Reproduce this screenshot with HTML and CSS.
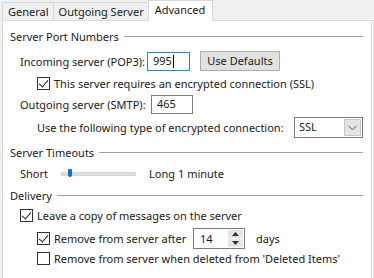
FILE: index.html
```html
<!DOCTYPE html>
<html lang="en">
<head>
    <meta charset="UTF-8">
    <title>Advanced</title>
    <link rel="stylesheet" href="styles.css">
</head>
<body>
<div class="tabs">
    <div class="tab">General</div>
    <div class="tab">Outgoing Server</div>
    <div class="tab active">Advanced</div>
</div>
<div class="panel">
    <div class="group-title"><span>Server Port Numbers</span><i></i></div>
    <div class="row r-incoming">
        <span class="label pop-label">Incoming server (POP3):</span>
        <span class="input focus in-pop">995<b class="caret"></b></span>
        <span class="button">Use Defaults</span>
    </div>
    <div class="row r-ssl indent">
        <span class="check on"></span><span>This server requires an encrypted connection (SSL)</span>
    </div>
    <div class="row r-smtp">
        <span class="label smtp-label">Outgoing server (SMTP):</span>
        <span class="input in-smtp">465</span>
    </div>
    <div class="row r-type indent">
        <span class="label type-label">Use the following type of encrypted connection:</span>
        <span class="select">
            <span class="select-value">SSL</span>
            <span class="select-arrow">
                <svg width="9" height="6" viewBox="0 0 9 6"><path d="M0.5 0.8 L4.5 4.8 L8.5 0.8" fill="none" stroke="#555" stroke-width="1"/></svg>
            </span>
        </span>
    </div>

    <div class="group-title g-timeouts"><span>Server Timeouts</span><i></i></div>
    <div class="row r-timeout">
        <span class="short">Short</span>
        <span class="slider"><span class="track"></span><span class="thumb"></span></span>
        <span class="long">Long</span>
        <span>1 minute</span>
    </div>

    <div class="group-title g-delivery"><span>Delivery</span><i></i></div>
    <div class="row r-leave">
        <span class="check on"></span><span>Leave a copy of messages on the server</span>
    </div>
    <div class="row r-remove indent">
        <span class="check on"></span><span class="remove-label">Remove from server after</span>
        <span class="spin">
            <span class="spin-value">14</span>
            <span class="spin-buttons">
                <span class="spin-btn"><svg width="7" height="4" viewBox="0 0 7 4"><path d="M3.5 0 L7 4 L0 4 Z" fill="#333"/></svg></span>
                <span class="spin-btn"><svg width="7" height="4" viewBox="0 0 7 4"><path d="M0 0 L7 0 L3.5 4 Z" fill="#333"/></svg></span>
            </span>
        </span>
        <span class="days">days</span>
    </div>
    <div class="row r-deleted indent">
        <span class="check"></span><span>Remove from server when deleted from 'Deleted Items'</span>
    </div>
</div>
</body>
</html>
```
FILE: styles.css
```css
/* Dialog base */
body {
    margin: 0;
    background-color: #f0f0f0;
    font-family: 'Noto Sans', 'Open Sans', sans-serif;
    font-size: 11px;
    color: #1a1a1a;
    width: 374px;
    height: 278px;
    overflow: hidden;
}

/* Tabs */
.tabs {
    display: flex;
    height: 20px;
    padding-left: 2px;
    align-items: flex-end;
}

.tab {
    height: 18px;
    line-height: 18px;
    padding: 0 4px 0 5px;
    border: 1px solid #d9d9d9;
    border-bottom: none;
    border-right: none;
    box-sizing: border-box;
    background-color: #f0f0f0;
    white-space: nowrap;
}

.tab.active {
    height: 21px;
    line-height: 17px;
    margin-bottom: -1px;
    background-color: #fff;
    border-right: 1px solid #d9d9d9;
    position: relative;
    z-index: 1;
    padding: 0 7px 0 6px;
}

.panel {
    background-color: #fff;
    border: 1px solid #d9d9d9;
    border-bottom: none;
    margin: 0 2px;
    height: 258px;
    box-sizing: border-box;
    padding: 0 8px 0 7px;
}

/* Group headers */
.group-title {
    display: flex;
    align-items: center;
    height: 16px;
    margin-top: 7px;
    white-space: nowrap;
}

.group-title i {
    flex: 1;
    border-top: 1px solid #a0a0a0;
    margin-left: 5px;
}

.g-timeouts {
    margin-top: 6px;
}

.g-delivery {
    margin-top: 6px;
}

/* Rows */
.row {
    display: flex;
    align-items: center;
    padding-left: 10px;
    white-space: nowrap;
}

.row.indent {
    padding-left: 27px;
}

.r-incoming {
    height: 20px;
    margin-top: 7px;
}

.r-ssl {
    height: 16px;
    margin-top: 4px;
}

.r-smtp {
    height: 20px;
    margin-top: 3px;
}

.r-type {
    height: 21px;
    margin-top: 3px;
}

.r-timeout {
    height: 16px;
    margin-top: 5px;
}

.r-leave {
    height: 16px;
    margin-top: 4px;
}

.r-remove {
    height: 21px;
    margin-top: 5px;
}

.r-deleted {
    height: 16px;
    margin-top: 1px;
}

.label {
    white-space: nowrap;
}

.pop-label {
    width: 127px;
}

.smtp-label {
    width: 131px;
}

/* Inputs */
.input {
    box-sizing: border-box;
    height: 19px;
    border: 1px solid #7a7a7a;
    padding-left: 5px;
    line-height: 16px;
    display: flex;
    align-items: center;
    flex-shrink: 0;
}

.input.focus {
    border-color: #3c7fb1;
}

.in-pop {
    width: 43px;
}

.in-smtp {
    width: 42px;
}

.caret {
    display: inline-block;
    width: 1px;
    height: 13px;
    background-color: #000;
    margin-left: 1px;
}

.button {
    box-sizing: border-box;
    height: 20px;
    width: 80px;
    margin-left: 10px;
    border: 1px solid #adadad;
    background-color: #e1e1e1;
    text-align: center;
    line-height: 18px;
    flex-shrink: 0;
}

.type-label {
    width: 250px;
}

.select {
    display: flex;
    box-sizing: border-box;
    width: 69px;
    height: 21px;
    margin-left: 8px;
    border: 1px solid #7a7a7a;
    background-color: #fff;
    flex-shrink: 0;
}

.select-value {
    flex: 1;
    padding-left: 4px;
    line-height: 17px;
}

.select-arrow {
    width: 17px;
    background-color: #e5e5e5;
    border: 1px solid #c8c8c8;
    box-sizing: border-box;
    display: flex;
    align-items: center;
    justify-content: center;
    margin: 1px;
}

/* Slider */
.short {
    width: 41px;
}

.slider {
    position: relative;
    width: 75px;
    height: 16px;
    flex-shrink: 0;
}

.track {
    position: absolute;
    left: 0;
    right: 0;
    top: 7px;
    height: 2px;
    background-color: #e0e0e0;
    border: 1px solid #d6d6d6;
}

.thumb {
    position: absolute;
    left: 7px;
    top: 4px;
    width: 4px;
    height: 8px;
    background-color: #0078d7;
    border-radius: 1px 1px 2px 2px;
}

.long {
    margin-left: 13px;
    width: 29px;
}

/* Checkboxes */
.check {
    box-sizing: border-box;
    width: 13px;
    height: 13px;
    border: 1px solid #333;
    background-color: #fff;
    margin-right: 4px;
    position: relative;
    flex-shrink: 0;
}

.check.on::after {
    content: "";
    position: absolute;
    left: 3px;
    top: 0px;
    width: 4px;
    height: 8px;
    border-right: 1px solid #222;
    border-bottom: 1px solid #222;
    transform: rotate(40deg);
}

/* Spin box */
.remove-label {
    width: 139px;
}

.spin {
    display: flex;
    box-sizing: border-box;
    width: 52px;
    height: 21px;
    border: 1px solid #7a7a7a;
    flex-shrink: 0;
}

.spin-value {
    flex: 1;
    padding-left: 6px;
    line-height: 20px;
}

.spin-buttons {
    display: flex;
    flex-direction: column;
    width: 15px;
    margin: 1px;
}

.spin-btn {
    flex: 1;
    background-color: #e5e5e5;
    display: flex;
    align-items: center;
    justify-content: center;
}

.spin-btn + .spin-btn {
    border-top: 1px solid #fff;
}

.days {
    margin-left: 11px;
}
```
